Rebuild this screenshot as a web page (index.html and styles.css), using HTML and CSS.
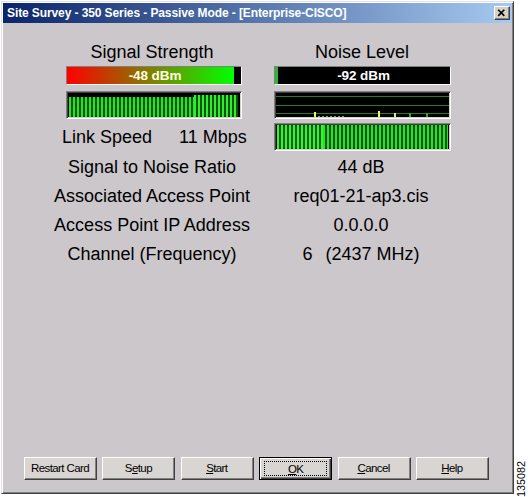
FILE: index.html
```html
<!DOCTYPE html>
<html>
<head>
<meta charset="utf-8">
<title>Site Survey</title>
<link rel="stylesheet" href="styles.css">
</head>
<body>
<div class="page">
  <div class="window">
    <div class="titlebar">
      <span class="title">Site Survey - 350 Series - Passive Mode - [Enterprise-CISCO]</span>
      <span class="close">
        <svg width="16" height="14" viewBox="0 0 16 14">
          <path d="M4.5 3.5 L11 10 M11 3.5 L4.5 10" stroke="#000" stroke-width="1.7" fill="none"/>
        </svg>
      </span>
    </div>
    <div class="body">
      <div class="meters">
        <div class="col col-left">
          <div class="heading">Signal Strength</div>
          <div class="level level-signal"><span>-48 dBm</span></div>
          <div class="graph graph-left">
            <div class="stripes seg-a"></div>
            <div class="stripes seg-b"></div>
          </div>
          <div class="link"><span>Link Speed</span><span>11 Mbps</span></div>
        </div>
        <div class="col col-right">
          <div class="heading">Noise Level</div>
          <div class="level level-noise"><span>-92 dBm</span></div>
          <div class="graph history">
            <svg width="173" height="24" viewBox="0 0 173 24">
              <rect x="0" y="3" width="173" height="1" fill="#237d23"/>
              <rect x="0" y="12" width="173" height="1" fill="#237d23"/>
              <rect x="0" y="20" width="173" height="1" fill="#237d23"/>
              <rect x="38" y="19" width="2" height="5" fill="#f4f45a"/>
              <rect x="42" y="23" width="2" height="1" fill="#8a9a70"/>
              <rect x="46" y="23" width="2" height="1" fill="#8a9a70"/>
              <rect x="50" y="23" width="2" height="1" fill="#8a9a70"/>
              <rect x="54" y="23" width="2" height="1" fill="#8a9a70"/>
              <rect x="58" y="23" width="2" height="1" fill="#8a9a70"/>
              <rect x="62" y="23" width="2" height="1" fill="#8a9a70"/>
              <rect x="66" y="23" width="2" height="1" fill="#8a9a70"/>
              <rect x="102" y="18" width="2" height="6" fill="#f4f45a"/>
              <rect x="118" y="20" width="2" height="4" fill="#eaea80"/>
              <rect x="133" y="20" width="2" height="4" fill="#3aa03a"/>
              <rect x="150" y="20" width="2" height="4" fill="#3aa03a"/>
            </svg>
          </div>
          <div class="graph graph-right">
            <div class="stripes seg-c"></div>
            <div class="stripes seg-d"></div>
          </div>
        </div>
      </div>
      <div class="stats">
        <div class="label">Signal to Noise Ratio</div><div class="value">44 dB</div>
        <div class="label">Associated Access Point</div><div class="value">req01-21-ap3.cis</div>
        <div class="label">Access Point IP Address</div><div class="value">0.0.0.0</div>
        <div class="label">Channel (Frequency)</div><div class="value">6<span class="freq">(2437 MHz)</span></div>
      </div>
      <div class="spacer"></div>
      <div class="buttons">
        <div class="btn"><span class="cap">Restart Card</span></div>
        <div class="btn"><span class="cap">S<u>e</u>tup</span></div>
        <div class="btn"><span class="cap"><u>S</u>tart</span></div>
        <div class="btn btn-default"><span class="cap focus"><u>O</u>K</span></div>
        <div class="btn"><span class="cap"><u>C</u>ancel</span></div>
        <div class="btn"><span class="cap"><u>H</u>elp</span></div>
      </div>
    </div>
  </div>
  <div class="figno">135082</div>
</div>
</body>
</html>
```

FILE: styles.css
```css
html, body {
  margin: 0;
  padding: 0;
  background: #ffffff;
}

.page {
  display: flex;
  padding: 1px 0 0 1px;
  width: 527px;
  height: 496px;
}

.window {
  box-sizing: border-box;
  width: 513px;
  height: 493px;
  background: #cbc7cb;
  border: 1px solid;
  border-color: #e4e0e4 #404040 #404040 #e4e0e4;
  box-shadow: inset 1px 1px #ffffff, inset -1px -1px #808080;
  padding: 1px;
  display: flex;
  flex-direction: column;
  font-family: "Liberation Sans", Arial, sans-serif;
  color: #000;
}

.titlebar {
  height: 20px;
  flex: none;
  display: flex;
  align-items: center;
  justify-content: space-between;
  padding: 0 2px 0 4px;
  background: linear-gradient(to right, #0a246a, #a6caf0);
}

.title {
  color: #ffffff;
  font-weight: bold;
  font-size: 12px;
  letter-spacing: -0.1px;
  white-space: nowrap;
}

.close {
  width: 16px;
  height: 14px;
  box-sizing: border-box;
  background: #d4d0c8;
  border: 1px solid;
  border-color: #ffffff #404040 #404040 #ffffff;
  box-shadow: inset -1px -1px #808080;
  display: flex;
  align-items: center;
  justify-content: center;
}

.close svg {
  display: block;
  margin: -1px 0 0 -1px;
}

.body {
  flex: 1;
  display: flex;
  flex-direction: column;
}

.meters {
  display: grid;
  grid-template-columns: 210px 210px;
  margin: 18px 0 0 44px;
}

.col {
  display: flex;
  flex-direction: column;
}

.heading {
  font-size: 18px;
  line-height: 22px;
  text-align: center;
}

.level {
  box-sizing: border-box;
  width: 176px;
  height: 19px;
  margin-top: 3px;
  border: 1px solid;
  border-color: #808080 #ffffff #ffffff #808080;
  display: flex;
  align-items: center;
  justify-content: center;
  font-size: 13.5px;
  font-weight: bold;
  letter-spacing: -0.1px;
  line-height: 17px;
  color: #ffffe6;
}

.level span {
  padding-left: 2px;
}

.col-left .level,
.col-left .graph {
  margin-left: 19px;
}

.col-right .level,
.col-right .graph {
  margin-left: 17px;
  width: 177px;
}

.level-signal {
  background: linear-gradient(to right, #ff0000 0, #00ff00 167px, #000000 167px);
}

.level-noise {
  background: linear-gradient(to right, #2fb52f 0 3px, #000000 3px);
  color: #ffffff;
}

.graph {
  box-sizing: border-box;
  width: 176px;
  height: 28px;
  margin-top: 6px;
  background: #000000;
  border: 1px solid;
  border-color: #808080 #ffffff #ffffff #808080;
  box-shadow: inset 1px 1px #404040, inset -1px -1px #d4d0c8;
  padding: 1px;
  display: flex;
  align-items: flex-end;
}

.graph svg {
  display: block;
}

.history {
  align-items: stretch;
}

.stripes {
  background: repeating-linear-gradient(to right, #22e622 0 2px, #0a520a 2px 4px);
}

.seg-a {
  width: 125px;
  height: 20px;
  margin-left: 1px;
}

.seg-b {
  flex: 1;
  height: 22px;
  margin-right: 2px;
  background: repeating-linear-gradient(to right, #2cf02c 0 2px, #0a520a 2px 4px);
}

.graph-right {
  margin-top: 4px;
  align-items: stretch;
}

.seg-c {
  width: 46px;
  margin-left: 1px;
  background: repeating-linear-gradient(to right, #30f830 0 2px, #0c5c0c 2px 4px);
}

.seg-d {
  flex: 1;
  margin-right: 1px;
}

.link {
  display: flex;
  gap: 27px;
  margin: 7px 0 0 15px;
  font-size: 18px;
  line-height: 22px;
}

.stats {
  display: grid;
  grid-template-columns: 210px 210px;
  margin: 2px 0 0 44px;
  font-size: 18px;
  line-height: 29px;
}

.label,
.value {
  text-align: center;
  white-space: nowrap;
}

.value {
  padding-right: 2px;
}

.freq {
  margin-left: 13px;
}

.spacer {
  flex: 1;
}

.buttons {
  display: flex;
  gap: 5.4px;
  padding-left: 21px;
  margin-bottom: 12px;
}

.btn {
  box-sizing: border-box;
  width: 73px;
  height: 23px;
  background: #d8d5d3;
  border: 1px solid;
  border-color: #ffffff #404040 #404040 #ffffff;
  box-shadow: inset -1px -1px #808080;
  display: flex;
  padding: 2px 3px 3px 2px;
}

.cap {
  flex: 1;
  display: flex;
  align-items: center;
  justify-content: center;
  font-size: 11.5px;
  letter-spacing: -0.6px;
  color: #000;
}

.btn-default {
  border: 1px solid #000000;
  box-shadow: inset 1px 1px #ffffff, inset -1px -1px #404040, inset -2px -2px #808080;
  padding: 3px 4px 3px 4px;
}

.focus {
  border: 1px dotted #000000;
}

.figno {
  align-self: flex-end;
  margin: 0 0 0 3px;
  writing-mode: vertical-rl;
  transform: rotate(180deg);
  font-family: "Liberation Sans", Arial, sans-serif;
  font-size: 10.8px;
  line-height: 9px;
  color: #000;
}
```
